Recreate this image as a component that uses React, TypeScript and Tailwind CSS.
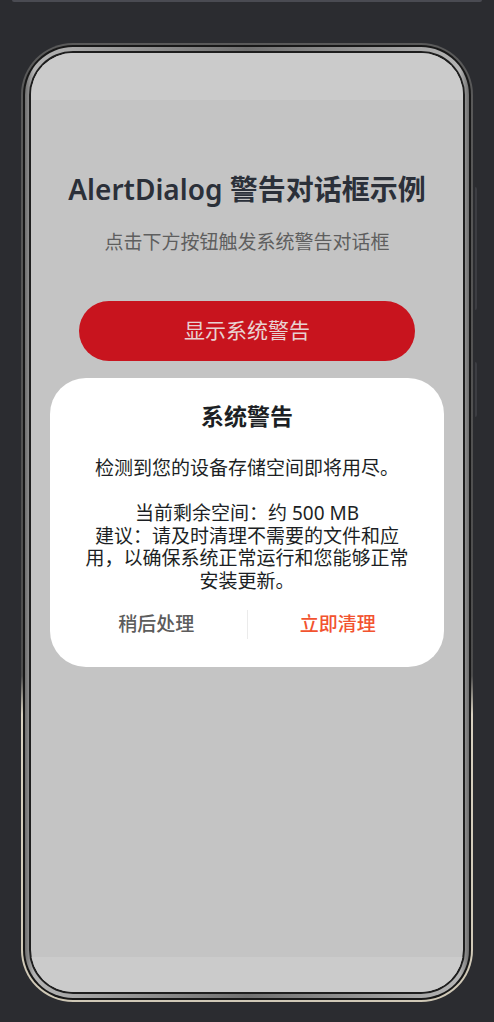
import React from "react"

const font = "font-['Noto_Sans','Noto_Sans_CJK_SC',sans-serif]"

function AlertBox() {
  return (
    <div className="w-[394px] rounded-[36px] bg-white pt-[23px] pb-[28px] flex flex-col items-center">
      <h2 className="text-[23px] leading-[30px] font-bold text-[#1c1f24]">
        系统警告
      </h2>

      <p className="mt-[26px] w-[330px] text-center text-[19px] leading-[22.5px] text-[#1c1f24] whitespace-pre-line">
        {"检测到您的设备存储空间即将用尽。\n\n当前剩余空间：约 500 MB\n建议：请及时清理不需要的文件和应用，以确保系统正常运行和您能够正常安装更新。"}
      </p>

      <div className="mt-[17px] w-full px-[16px] flex items-center h-[30px]">
        <button className="flex-1 text-[19px] font-medium text-[#5c5c5c]">
          稍后处理
        </button>
        <div className="w-px h-[29px] bg-[#ebebeb]" />
        <button className="flex-1 text-[19px] font-medium text-[#f2532f]">
          立即清理
        </button>
      </div>
    </div>
  )
}

export default function App() {
  return (
    <div className={`w-[494px] h-[1022px] bg-[#2b2c30] overflow-hidden ${font}`}>
      {/* strip from the toolbar above */}
      <div className="mx-[12px] h-[2px] rounded-b-[3px] bg-[#4a4b52]" />

      {/* =========================
          PHONE FRAME
      ========================== */}
      <div className="relative mt-[41px] mx-[21px] h-[959px] rounded-[52px] p-[2px] bg-[linear-gradient(to_bottom,#5a5a5a_0%,#4c4c4c_66%,#d8d1c0_70%,#cfc8b6_100%)]">
        {/* side keys */}
        <div className="absolute right-[-4px] top-[144px] w-[2px] h-[123px] rounded-r bg-[#3c3d42]" />
        <div className="absolute right-[-4px] top-[319px] w-[2px] h-[55px] rounded-r bg-[#3c3d42]" />

        <div className="h-full rounded-[50px] p-[2px] bg-[#181818]">
          <div className="h-full rounded-[48px] p-[4px] bg-[linear-gradient(to_right,#6e6e6e,#b4b4b4_2%,#707070_50%,#b4b4b4_98%,#6e6e6e)]">
            <div className="h-full rounded-[44px] p-[2px] bg-[#1e1e1e]">

              {/* =========================
                  SCREEN
              ========================== */}
              <div className="relative h-full rounded-[42px] overflow-hidden flex flex-col bg-[#c4c4c4]">
                <div className="h-[47px] bg-[#cbcbcb]" />

                <div className="flex-1 flex flex-col items-center pt-[71px]">
                  <h1 className="text-[28px] leading-[36px] font-semibold text-[#2b3039]">
                    AlertDialog 警告对话框示例
                  </h1>

                  <p className="mt-[22px] text-[19px] leading-[26px] text-[#5e5e5e]">
                    点击下方按钮触发系统警告对话框
                  </p>

                  <button className="mt-[46px] w-[336px] h-[60px] rounded-full bg-[#c8141e] text-[21px] text-[#e8d2d2]">
                    显示系统警告
                  </button>
                </div>

                <div className="h-[35px] bg-[#cbcbcb]" />

                {/* dialog over the dimmed page */}
                <div className="absolute inset-0 flex items-center justify-center">
                  <AlertBox />
                </div>
              </div>

            </div>
          </div>
        </div>
      </div>
    </div>
  )
}
